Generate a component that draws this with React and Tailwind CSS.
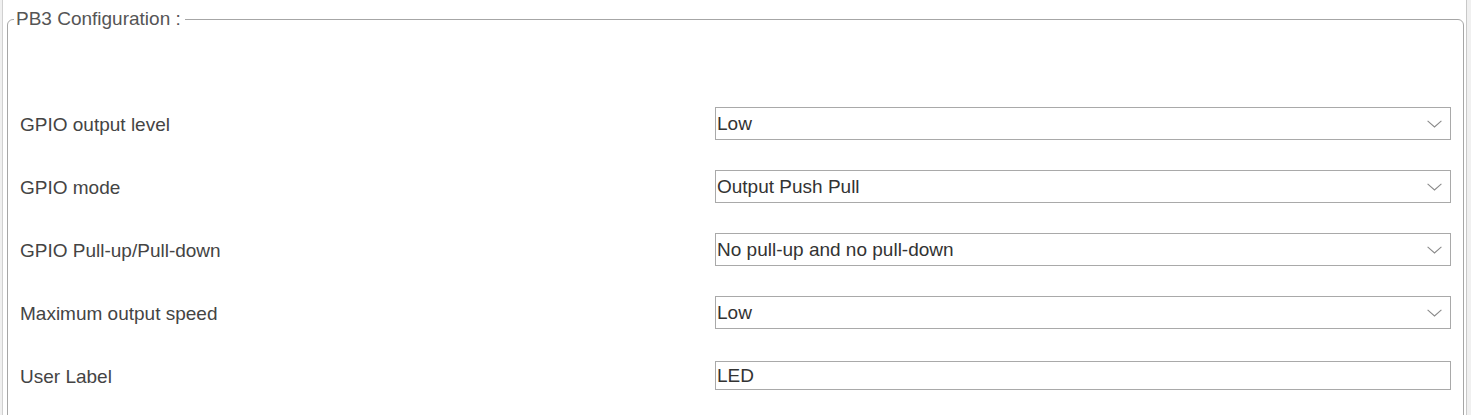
import React from "react";

const Chevron = () => (
  <svg width="15" height="8" viewBox="0 0 15 8" className="shrink-0">
    <path d="M0.6 0.8 L7.5 7 L14.4 0.8" fill="none" stroke="#8a8a8a" strokeWidth="1.1" />
  </svg>
);

const Select = ({ value }) => (
  <div className="h-[33px] w-full border border-[#a9a9a9] bg-white flex items-center justify-between pl-[1px] pr-[8px] text-[#333333]">
    <span className="pt-[2px]">{value}</span>
    <Chevron />
  </div>
);

const Input = ({ value }) => (
  <div className="h-[29px] w-full border border-[#a9a9a9] bg-white flex items-center pl-[1px] text-[#333333]">
    <span className="pt-[1px]">{value}</span>
  </div>
);

const rows = [
  { label: "GPIO output level", value: "Low", type: "select" },
  { label: "GPIO mode", value: "Output Push Pull", type: "select" },
  { label: "GPIO Pull-up/Pull-down", value: "No pull-up and no pull-down", type: "select" },
  { label: "Maximum output speed", value: "Low", type: "select" },
  { label: "User Label", value: "LED", type: "input" },
];

export default function App() {
  return (
    <div
      className="w-[1471px] h-[415px] overflow-hidden bg-white flex text-[19px]"
      style={{ fontFamily: "'Liberation Sans', Arial, sans-serif" }}
    >
      <div className="w-[2px] bg-[#f0f0f0] shrink-0" />
      <div className="w-[1px] bg-[#d0d0d0] shrink-0" />
      <div className="w-[4px] shrink-0" />
      <fieldset className="flex-1 h-[430px] border border-[#a6a6a6] rounded-[6px] mt-[9px] px-[12px] min-w-0">
        <legend className="-ml-[6px] pl-[2px] pr-[4px] text-[#555555] leading-[20px]">PB3 Configuration :</legend>
        <div className="pt-[63px] flex flex-col">
          {rows.map((r) => (
            <div key={r.label} className="h-[63px] grid grid-cols-[1fr_736px] items-center">
              <span className="text-[#444444] pt-[3px]">{r.label}</span>
              {r.type === "select" ? <Select value={r.value} /> : <Input value={r.value} />}
            </div>
          ))}
        </div>
      </fieldset>
      <div className="w-[2px] shrink-0" />
      <div className="w-[1px] bg-[#c8c8c8] shrink-0" />
      <div className="w-[4px] bg-[#f0f0f0] shrink-0" />
    </div>
  );
}
